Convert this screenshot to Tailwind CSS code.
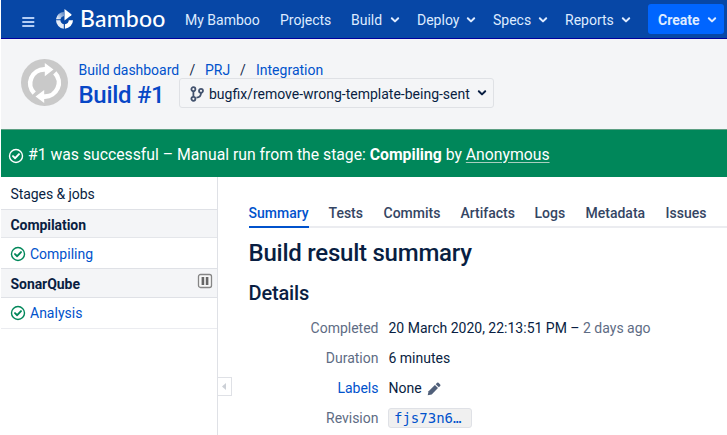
<!DOCTYPE html>
<html lang="en">
<head>
<meta charset="utf-8">
<title>Build #1 - Bamboo</title>
<script src="https://cdn.jsdelivr.net/npm/@tailwindcss/browser@4"></script>
</head>
<body class="w-[727px] h-[435px] overflow-hidden bg-white pl-px font-['Roboto',sans-serif] text-[14px] leading-5 text-[#091e42]">
<svg class="hidden">
  <symbol id="chev" viewBox="0 0 10 8"><path d="M1.8 2.2 5 5.4 8.2 2.2" fill="none" stroke="currentColor" stroke-width="2" stroke-linecap="round" stroke-linejoin="round"/></symbol>
  <symbol id="ok" viewBox="0 0 16 16"><circle cx="8" cy="8" r="6.5" fill="none" stroke="currentColor" stroke-width="1.4"/><path d="M5 8.1 7.2 10.2 11 6.1" fill="none" stroke="currentColor" stroke-width="1.9" stroke-linecap="round" stroke-linejoin="round"/></symbol>
</svg>
<header class="flex h-[39px] items-center border-b border-[#00009c] bg-[#0747a6] pl-[21px] text-[#deebff]">
  <svg class="mt-[6px] h-3 w-[34px] shrink-0" viewBox="0 0 34 12"><path d="M.3 2H12.3M.3 6H12.3M.3 10H12.3" stroke="#b3cdf5" stroke-width="1.8"/></svg>
  <svg class="h-5 w-[24px] shrink-0" viewBox="0 0 24 20">
    <defs><linearGradient id="lg" x1="0" y1="1" x2="1" y2="0"><stop offset="0" stop-color="#fff"/><stop offset="1" stop-color="#fff" stop-opacity=".3"/></linearGradient></defs>
    <path d="M8.5 0 15.3 5.2Q15.8 5.7 15.3 6.2L8.5 11.5Z" fill="#fff"/>
    <path d="M8 2.8V7.1A4.2 4.2 0 0 0 4.4 10.3H0A8.4 8.4 0 0 1 8 2.8Z" fill="url(#lg)"/>
    <path d="M0 11.3H4.4A4.3 4.3 0 0 0 7.8 15.2V19.7A8.5 8.5 0 0 1 0 11.3Z" fill="#e4ecf8"/>
    <path d="M12.8 11.3H17A8.5 8.5 0 0 1 8.9 19.7V15.2A4.2 4.2 0 0 0 12.8 11.3Z" fill="#fff"/>
  </svg>
  <div class="w-[105px] shrink-0 pb-px font-['Lato',sans-serif] text-[23px] font-medium leading-none tracking-[0.2px] text-white">Bamboo</div>
  <nav class="flex shrink-0 items-center pt-px whitespace-nowrap">
    <a class="w-[95px]">My Bamboo</a>
    <a class="w-[71px]">Projects</a>
    <a class="flex w-[66px] items-center justify-between pr-[17px]">Build <svg class="h-2 w-2.5"><use href="#chev"/></svg></a>
    <a class="flex w-[76px] items-center justify-between pr-[17px]">Deploy <svg class="h-2 w-2.5"><use href="#chev"/></svg></a>
    <a class="flex w-[72px] items-center justify-between pr-[17px]">Specs <svg class="h-2 w-2.5"><use href="#chev"/></svg></a>
    <a class="flex w-[83px] items-center justify-between pr-[17px]">Reports <svg class="h-2 w-2.5"><use href="#chev"/></svg></a>
  </nav>
  <button class="flex h-[30px] w-[76px] shrink-0 items-center justify-between rounded-[3px] bg-[#0065ff] pt-px pr-[7px] pl-[10px] font-bold">Create <svg class="h-2 w-2.5"><use href="#chev"/></svg></button>
</header>

<section class="flex h-[90px] bg-[#f4f5f7] pt-5 pl-5">
  <svg class="h-12 w-[57.5px] shrink-0" viewBox="0 0 57.5 48">
    <circle cx="23.5" cy="23.5" r="23.5" fill="#c9c9c9"/>
    <g fill="none" stroke="#fff" stroke-width="4.6"><path d="M13.2 34.2A14 14 0 0 1 23.5 10.4H25"/><path d="M33.8 13.8A14 14 0 0 1 23.5 37.6H22"/></g>
    <path d="M23.8 4 32.5 10.6 23.8 17.2ZM23.2 31 14.5 37.4 23.2 44Z" fill="#fff"/>
  </svg>
  <div>
    <div class="flex pt-px text-[#0052cc]"><a class="w-[111px] tracking-[-0.03px]">Build dashboard</a><span class="w-[15.5px] text-[#172b4d]">/</span><a class="w-[35px]">PRJ</a><span class="w-4 text-[#172b4d]">/</span><a>Integration</a></div>
    <div class="flex">
      <h1 class="w-[100.5px] text-[24px] font-medium leading-[30px] tracking-[-0.3px] text-[#0747c6]">Build #1</h1>
      <div class="-mt-[2px] flex h-[30px] w-[315px] items-center rounded-[3px] border border-[#dfe1e5] pl-[10px]">
        <svg class="mt-[2px] h-4 w-[19px] shrink-0" viewBox="0 0 19 16" fill="none" stroke="#42526e" stroke-width="1.8"><circle cx="3.4" cy="3.2" r="2"/><circle cx="3.4" cy="12.8" r="2"/><circle cx="11" cy="4.8" r="2"/><path d="M3.4 5.2V10.8M11 6.8C11 10.2 9.6 11.6 6.4 11.7"/></svg>
        <span class="w-[267.5px] pt-px">bugfix/remove-wrong-template-being-sent</span>
        <svg class="h-2 w-2.5 shrink-0"><use href="#chev"/></svg>
      </div>
    </div>
  </div>
</section>

<section class="flex h-12 items-center border-t border-[#5c9f83] bg-[#00875a] pl-[7px] text-[15.75px] text-white">
  <svg class="mt-[5px] mr-1 h-4 w-4"><use href="#ok"/></svg>
  <p class="whitespace-nowrap pt-[2px]">#1 was successful – Manual run from the stage: <b>Compiling</b> by <a class="underline decoration-[#a8cfbf] underline-offset-2">Anonymous</a></p>
</section>

<main class="flex h-[258px]">
  <aside class="w-[217px] shrink-0 border-r border-[#dfe1e6] text-[#0052cc]">
    <div class="h-[33px] border-b border-[#dfe1e6] pt-[7px] pl-[9.5px] tracking-[-0.08px] text-[#091e42]">Stages &amp; jobs</div>
    <div class="h-7 border-b border-[#e4e6ea] bg-[#f4f5f7] pt-[5px] pl-[9.5px] font-bold tracking-[-0.06px] text-[#091e42]">Compilation</div>
    <div class="flex h-[31px] items-center gap-1 border-b border-[#dfe1e6] pt-px pl-[9px]"><svg class="h-4 w-4 text-[#00875a]"><use href="#ok"/></svg>Compiling</div>
    <div class="flex h-[29px] items-center justify-between border-b border-[#dfe1e6] bg-[#f4f5f7] pt-px pr-1 pl-[9.5px] font-bold tracking-[-0.06px] text-[#091e42]">SonarQube
      <svg class="mb-[5px] h-4 w-4" viewBox="0 0 16 16"><rect x="1.5" y="1.5" width="13" height="13" rx="2" fill="#f8f8f8" stroke="#858585" stroke-width="1.3"/><path d="M5.9 4V12M10.1 4V12" stroke="#666" stroke-width="2.6"/></svg></div>
    <div class="flex h-[31px] items-center gap-1 border-b border-[#ebecf0] pl-[9px]"><svg class="h-4 w-4 text-[#00875a]"><use href="#ok"/></svg>Analysis</div>
  </aside>
  <div class="mt-[200px] flex h-[19px] w-[14px] shrink-0 items-center justify-center border border-l-0 border-[#dfe1e6]"><svg class="mr-[2px] h-[7px] w-1" viewBox="0 0 4 7"><path d="M4 0V7L0 3.5Z" fill="#ccd0d6"/></svg></div>
  <div class="flex-1 pt-[26px] pl-[16.5px]">
    <nav class="flex h-[25px] border-b-2 border-[#ebecf0] font-medium text-[#344563]">
      <a class="mr-5 h-[25px] w-[60px] border-b-2 border-[#0052cc] text-[#0052cc]">Summary</a>
      <a class="w-[55px]">Tests</a><a class="w-[77px]">Commits</a><a class="w-[74px]">Artifacts</a><a class="w-[51px]">Logs</a><a class="w-[80px]">Metadata</a><a>Issues</a>
    </nav>
    <h2 class="mt-[11px] text-[24px] font-medium leading-7 tracking-[-0.24px]">Build result summary</h2>
    <h3 class="mt-[14px] text-[20px] font-medium leading-6 tracking-[-0.15px]">Details</h3>
    <dl class="mt-[8px] grid grid-cols-[130px_1fr] gap-x-[10px] [grid-auto-rows:30px] items-center">
      <dt class="text-right text-[#5e6c84]">Completed</dt><dd>20 March 2020, 22:13:51 PM – <span class="text-[#5e6c84]">2 days ago</span></dd>
      <dt class="text-right text-[#5e6c84]">Duration</dt><dd>6 minutes</dd>
      <dt class="text-right text-[#0052cc]">Labels</dt><dd class="flex items-center gap-[5px]">None <svg class="mt-[2px] h-[14px] w-[14px]" viewBox="0 0 14 14" fill="#505f79"><path d="M.7 13.3 1.6 9.3 7.9 3 11 6.1 4.7 12.4Z"/><path d="M8.7 2.2 10.1.8Q10.8.2 11.5.8L13.2 2.5Q13.8 3.2 13.2 3.9L11.8 5.3Z"/></svg></dd>
      <dt class="text-right text-[#5e6c84]">Revision</dt><dd class="-mt-px -ml-[0.5px] flex h-5 w-[84px] items-center rounded-[3px] border border-[#dfe1e6] bg-[#f0f0f0] pl-[5px] font-['DejaVu_Sans_Mono',monospace] text-[14px] text-[#0052cc]">fjs73n6…</dd>
    </dl>
  </div>
</main>
</body>
</html>
